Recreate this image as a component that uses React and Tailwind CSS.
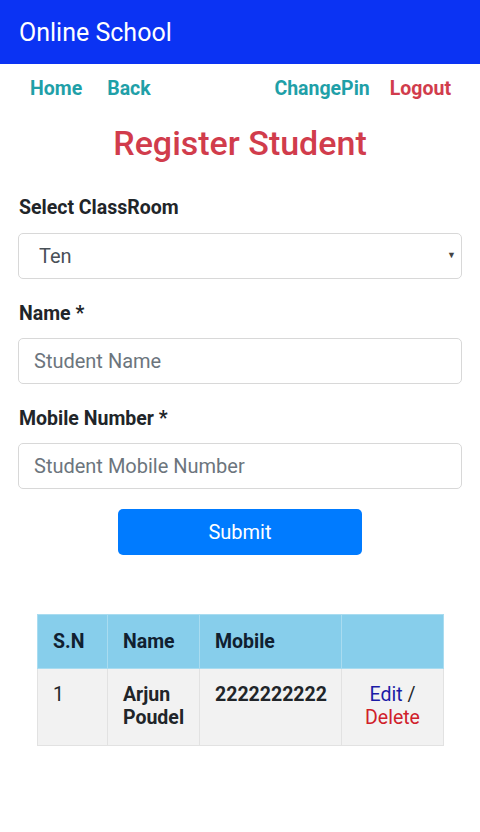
import React from 'react';

export default function App() {
  return (
    <div className="min-h-[832px] bg-white text-[#212529] font-[Roboto,sans-serif]">
      {/* Top bar */}
      <header className="h-16 bg-[#0b33f3] flex items-center px-[19px]">
        <h1 className="text-white text-[25px] leading-none font-normal">Online School</h1>
      </header>

      {/* Nav links */}
      <nav className="h-[50px] flex items-center pl-[30px] pr-[29px] text-[19.5px] font-bold">
        <a className="text-[#1fa0a8]">Home</a>
        <a className="ml-[25px] text-[#1fa0a8]">Back</a>
        <a className="ml-auto text-[#1fa0a8]">ChangePin</a>
        <a className="ml-[20px] text-[#d13c4c]">Logout</a>
      </nav>

      <h2 className="mt-[10px] text-center text-[34px] leading-[38px] font-medium text-[#d13c4c]">
        Register Student
      </h2>

      {/* Form */}
      <form className="px-[18px] mt-[32px]" onSubmit={(e) => e.preventDefault()}>
        <label className="block pl-px text-[19.5px] leading-[27px] font-bold">Select ClassRoom</label>
        <div className="relative mt-[12px]">
          <select className="appearance-none w-full h-[46px] rounded-[5px] border border-[#d8d8d8] bg-white pl-[20px] text-[20px] text-[#495057] outline-none">
            <option>Ten</option>
          </select>
          <span className="absolute right-[6px] top-1/2 -translate-y-1/2 text-[9px] text-[#444]">▼</span>
        </div>

        <label className="block pl-px mt-[21px] text-[19.5px] leading-[27px] font-bold">Name *</label>
        <input
          className="block mt-[11px] w-full h-[46px] rounded-[5px] border border-[#d8d8d8] px-[15px] text-[20px] placeholder:text-[#6c757d] outline-none"
          placeholder="Student Name"
        />

        <label className="block pl-px mt-[21px] text-[19.5px] leading-[27px] font-bold">Mobile Number *</label>
        <input
          className="block mt-[11px] w-full h-[46px] rounded-[5px] border border-[#d8d8d8] px-[15px] text-[20px] placeholder:text-[#6c757d] outline-none"
          placeholder="Student Mobile Number"
        />

        <div className="flex justify-center mt-[20px]">
          <button className="w-[244px] h-[46px] rounded-[5px] bg-[#007bff] text-white text-[20px]">
            Submit
          </button>
        </div>
      </form>

      {/* Student list */}
      <div className="px-[37px] mt-[59px]">
        <table className="w-[406px] border-collapse text-[19.5px] table-fixed">
          <colgroup>
            <col className="w-[70px]" />
            <col className="w-[92px]" />
            <col className="w-[142px]" />
            <col className="w-[102px]" />
          </colgroup>
          <thead>
            <tr className="bg-[#87ceeb] h-[54px]">
              <th className="text-left font-bold px-[15px] border border-[#a9dcf0] text-[#102030]">S.N</th>
              <th className="text-left font-bold px-[15px] border border-[#a9dcf0] text-[#102030]">Name</th>
              <th className="text-left font-bold px-[15px] border border-[#a9dcf0] text-[#102030]">Mobile</th>
              <th className="border border-[#a9dcf0]"></th>
            </tr>
          </thead>
          <tbody>
            <tr className="bg-[#f2f2f2] h-[77px] align-top">
              <td className="px-[15px] pt-[14px] leading-[23px] border border-[#e2e2e2]">1</td>
              <td className="px-[15px] pt-[14px] leading-[23px] font-bold border border-[#e2e2e2]">Arjun Poudel</td>
              <td className="px-[15px] pt-[14px] leading-[23px] font-bold border border-[#e2e2e2]">2222222222</td>
              <td className="px-[10px] pt-[14px] leading-[23px] text-center border border-[#e2e2e2]">
                <a className="text-[#1c1ca6]">Edit</a> / <a className="text-[#d0202a]">Delete</a>
              </td>
            </tr>
          </tbody>
        </table>
      </div>
    </div>
  );
}
